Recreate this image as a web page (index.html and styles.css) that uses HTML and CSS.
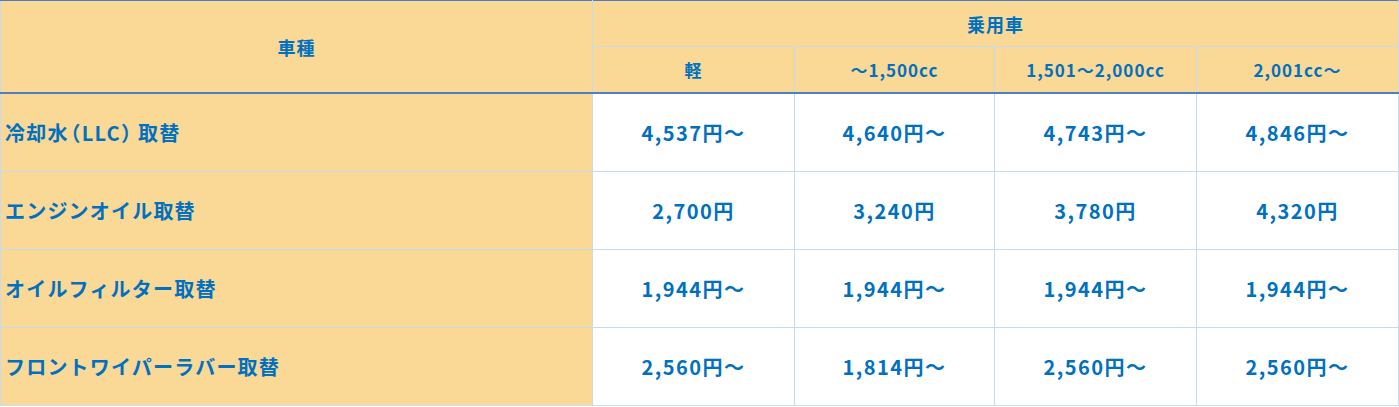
FILE: index.html
```html
<!DOCTYPE html>
<html lang="ja">
<head>
<meta charset="utf-8">
<title>料金表</title>
<link rel="stylesheet" href="styles.css">
</head>
<body>
<table class="price">
  <colgroup>
    <col class="c-name">
    <col class="c-a">
    <col class="c-b">
    <col class="c-c">
    <col class="c-d">
  </colgroup>
  <thead>
    <tr class="h1">
      <th rowspan="2" class="kind">車種</th>
      <th colspan="4" class="group">乗用車</th>
    </tr>
    <tr class="h2">
      <th>軽</th>
      <th>〜1,500cc</th>
      <th>1,501〜2,000cc</th>
      <th>2,001cc〜</th>
    </tr>
  </thead>
  <tbody>
    <tr>
      <th class="name">冷却水<span class="paren-l">（</span>LLC<span class="paren-r">）</span>取替</th>
      <td>4,537円〜</td><td>4,640円〜</td><td>4,743円〜</td><td>4,846円〜</td>
    </tr>
    <tr>
      <th class="name">エンジンオイル取替</th>
      <td>2,700円</td><td>3,240円</td><td>3,780円</td><td>4,320円</td>
    </tr>
    <tr>
      <th class="name">オイルフィルター取替</th>
      <td>1,944円〜</td><td>1,944円〜</td><td>1,944円〜</td><td>1,944円〜</td>
    </tr>
    <tr>
      <th class="name">フロントワイパーラバー取替</th>
      <td>2,560円〜</td><td>1,814円〜</td><td>2,560円〜</td><td>2,560円〜</td>
    </tr>
  </tbody>
</table>
</body>
</html>
```
FILE: styles.css
```css
html, body {
  margin: 0;
  padding: 0;
  background: #ffffff;
}
body {
  font-family: "Noto Sans CJK JP", "Noto Sans", sans-serif;
  color: #0070c0;
}
.price {
  border-collapse: collapse;
  table-layout: fixed;
  width: 1398px;
  border-top: 1px solid #4a7cc8;
  border-bottom: 1px solid #b4c8e0;
}
.c-name { width: 592px; }
.c-a { width: 202px; }
.c-b { width: 200px; }
.c-c { width: 202px; }
.c-d { width: 202px; }
th, td {
  padding: 0;
  border: 1px solid #c6dcee;
  font-weight: bold;
  text-align: center;
  vertical-align: middle;
}
thead th {
  background: #fad896;
  font-size: 18px;
  letter-spacing: 1px;
  height: 45px;
  line-height: 22px;
}
thead tr.h1 th {
  border-top: 1px solid #4a7cc8;
}
thead tr.h2 th {
  border-bottom: 2px solid #4f7ec2;
  font-size: 17px;
  letter-spacing: 1px;
}
thead th.kind {
  border-bottom: 2px solid #4f7ec2;
}
tbody th.name {
  background: #fad896;
  text-align: left;
  padding-left: 4px;
  font-size: 20px;
  letter-spacing: 1.2px;
}
.paren-l {
  font-feature-settings: "halt";
  padding-left: 2px;
}
.paren-r {
  font-feature-settings: "halt";
  padding-right: 6px;
}
tbody td {
  background: #ffffff;
  font-size: 20px;
  letter-spacing: 1.5px;
}
tbody tr th, tbody tr td {
  height: 77px;
}
```
